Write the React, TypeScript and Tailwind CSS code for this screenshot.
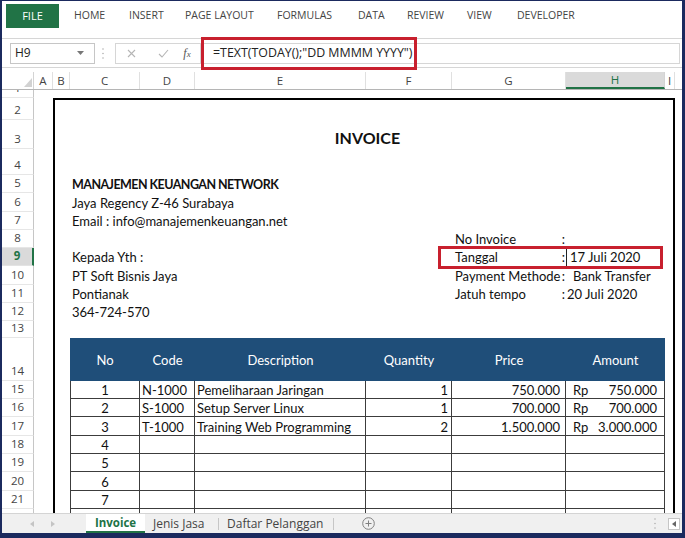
import React from 'react';

type Row = { n: number; h: string };
const R18 = 'h-[18.3px]';
const ROWS: Row[] = [
  { n: 1, h: 'h-[8px]' },
  { n: 2, h: 'h-[22px]' },
  { n: 3, h: 'h-[29px]' },
  { n: 4, h: 'h-[26px]' },
  { n: 5, h: R18 },
  { n: 6, h: R18 },
  { n: 7, h: R18 },
  { n: 8, h: R18 },
  { n: 9, h: R18 },
  { n: 10, h: R18 },
  { n: 11, h: R18 },
  { n: 12, h: R18 },
  { n: 13, h: 'h-[17px]' },
  { n: 14, h: 'h-[42.5px]' },
  { n: 15, h: R18 },
  { n: 16, h: R18 },
  { n: 17, h: R18 },
  { n: 18, h: R18 },
  { n: 19, h: R18 },
  { n: 20, h: R18 },
  { n: 21, h: R18 },
  { n: 22, h: R18 },
];

const COLS: [string, string][] = [
  ['A', 'w-[19px]'],
  ['B', 'w-[17px]'],
  ['C', 'w-[70px]'],
  ['D', 'w-[55px]'],
  ['E', 'w-[171px]'],
  ['F', 'w-[86px]'],
  ['G', 'w-[114px]'],
  ['H', 'w-[99px]'],
  ['I', 'w-[10px]'],
];

type D = { no: string; code?: string; desc?: string; qty?: string; price?: string; amt?: string };
const DATA: D[] = [
  { no: '1', code: 'N-1000', desc: 'Pemeliharaan Jaringan', qty: '1', price: '750.000', amt: '750.000' },
  { no: '2', code: 'S-1000', desc: 'Setup Server Linux', qty: '1', price: '700.000', amt: '700.000' },
  { no: '3', code: 'T-1000', desc: 'Training Web Programming', qty: '2', price: '1.500.000', amt: '3.000.000' },
  { no: '4' },
  { no: '5' },
  { no: '6' },
  { no: '7' },
  { no: '' },
];

function Ribbon() {
  const tabs: [string, string][] = [
    ['HOME', 'w-[55px]'],
    ['INSERT', 'w-[56px]'],
    ['PAGE LAYOUT', 'w-[92px]'],
    ['FORMULAS', 'w-[81px]'],
    ['DATA', 'w-[49px]'],
    ['REVIEW', 'w-[60px]'],
    ['VIEW', 'w-[50px]'],
    ['DEVELOPER', 'w-[80px]'],
  ];
  return (
    <div className="h-[38px] shrink-0 border-b border-[#d6d6d6] flex items-start pt-[3px] pl-[4px]">
      <div className="w-[53px] h-[24px] bg-[#217346] text-white text-[11px] flex items-center justify-center">FILE</div>
      <div className="flex items-center h-[24px] ml-[15px] text-[10.5px] text-[#444]">
        {tabs.map(([t, w]) => (
          <div key={t} className={`${w} whitespace-nowrap`}>
            {t}
          </div>
        ))}
      </div>
    </div>
  );
}

function FormulaBar() {
  return (
    <div className="h-[29px] shrink-0 border-b border-[#d6d6d6] flex items-center pl-[8px] pr-[2px]">
      <div className="w-[85px] h-[21px] border border-[#c6c6c6] flex items-center justify-between pl-[4px] pr-[10px] text-[12px] text-[#222]">
        <span>H9</span>
        <svg width="7" height="4" viewBox="0 0 7 4">
          <path d="M0 0H7L3.5 4Z" fill="#777" />
        </svg>
      </div>
      <div className="w-[16px] flex justify-center">
        <svg width="2" height="11" viewBox="0 0 2 11">
          <circle cx="1" cy="1" r="0.8" fill="#b0b0b0" />
          <circle cx="1" cy="5.5" r="0.8" fill="#b0b0b0" />
          <circle cx="1" cy="10" r="0.8" fill="#b0b0b0" />
        </svg>
      </div>
      <div className="ml-[4px] flex-1 h-[21px] border border-[#d6d6d6] flex items-center">
        <div className="w-[30px] flex justify-center">
          <svg width="9" height="9" viewBox="0 0 9 9">
            <path d="M1 1L8 8M8 1L1 8" stroke="#b5b5b5" strokeWidth="1.1" />
          </svg>
        </div>
        <div className="w-[34px] flex justify-center">
          <svg width="11" height="9" viewBox="0 0 11 9">
            <path d="M1 5L4 8L10 1" stroke="#b5b5b5" strokeWidth="1.1" fill="none" />
          </svg>
        </div>
        <div className="w-[14px] flex justify-center items-baseline italic [font-family:'Liberation_Serif',serif] text-[#555] text-[12px]">
          <span>f</span>
          <span className="text-[9px]">x</span>
        </div>
        <div className="w-[6px]" />
        <div className="h-full border-l border-[#d6d6d6] pl-[12px] flex items-center text-[12.4px] text-[#222] whitespace-nowrap">
          {'=TEXT(TODAY();"DD MMMM YYYY")'}
        </div>
      </div>
    </div>
  );
}

function ColumnHeaders() {
  return (
    <div className="mt-[4px] h-[18px] shrink-0 flex border-b border-[#b5b5b5] text-[11.5px] text-[#444]">
      <div className="w-[32px] shrink-0 border-r border-[#d4d4d4] flex items-end justify-end pr-[1px] pb-[2px]">
        <svg width="8" height="9" viewBox="0 0 8 9">
          <path d="M8 0V9H0Z" fill="#d2d2d2" />
        </svg>
      </div>
      {COLS.map(([l, w]) =>
        l === 'H' ? (
          <div
            key={l}
            className={`${w} shrink-0 flex items-center justify-center bg-[#dadada] text-[#217346] border-r border-[#d4d4d4] border-b-2 border-b-[#217346]`}
          >
            {l}
          </div>
        ) : (
          <div key={l} className={`${w} shrink-0 flex items-center justify-center border-r border-[#e0e0e0]`}>
            {l}
          </div>
        )
      )}
      <div className="flex-1" />
    </div>
  );
}

function InfoRow({
  left,
  bold,
  g,
  hText,
  hCls,
}: {
  left?: string;
  bold?: boolean;
  g?: string;
  hText?: string;
  hCls?: string;
}) {
  return (
    <div className={`${R18} shrink-0 flex w-[595px] text-[13px] leading-[15px] text-[#111]`}>
      <div
        className={`w-[382px] shrink-0 flex items-end pb-[1px] pl-[2px] whitespace-nowrap ${
          bold ? 'font-bold text-[12.5px] tracking-[-0.55px]' : ''
        }`}
      >
        {left}
      </div>
      <div className="w-[114px] shrink-0 flex items-end justify-between pb-[1px] pl-[3px] pr-[1px] whitespace-nowrap">
        <span>{g}</span>
        <span>{g ? ':' : ''}</span>
      </div>
      <div className={`w-[99px] shrink-0 flex items-end pb-[1px] whitespace-nowrap ${hCls ?? ''}`}>{hText}</div>
    </div>
  );
}

function TableHeader() {
  const heads: [string, string][] = [
    ['No', 'w-[70px]'],
    ['Code', 'w-[55px]'],
    ['Description', 'w-[171px]'],
    ['Quantity', 'w-[86px]'],
    ['Price', 'w-[114px]'],
    ['Amount', 'w-[99px]'],
  ];
  return (
    <div className="h-[42.5px] shrink-0 flex w-[595px] bg-[#1f4e79] text-white text-[13px] pt-[2px]">
      {heads.map(([t, w]) => (
        <div key={t} className={`${w} shrink-0 flex items-center justify-center`}>
          {t}
        </div>
      ))}
    </div>
  );
}

function DataRow({ d }: { d: D }) {
  const base = 'shrink-0 border-r border-b border-[#3c3c3c] flex items-end pb-0 whitespace-nowrap';
  return (
    <div className={`${R18} shrink-0 flex w-[595px] text-[13px] leading-[15px] text-[#111]`}>
      <div className={`${base} w-[70px] border-l justify-center`}>{d.no}</div>
      <div className={`${base} w-[55px] pl-[2px]`}>{d.code}</div>
      <div className={`${base} w-[171px] pl-[2px]`}>{d.desc}</div>
      <div className={`${base} w-[86px] justify-end pr-[3px]`}>{d.qty}</div>
      <div className={`${base} w-[114px] justify-end pr-[5px]`}>{d.price}</div>
      <div className={`${base} w-[99px] justify-between pl-[7px] pr-[7px]`}>
        <span>{d.amt ? 'Rp' : ''}</span>
        <span>{d.amt}</span>
      </div>
    </div>
  );
}

function Body() {
  return (
    <div className="flex-1 flex overflow-hidden">
      <div className="w-[32px] shrink-0 flex flex-col">
        {ROWS.map((r) =>
          r.n === 9 ? (
            <div
              key={r.n}
              className={`${r.h} shrink-0 flex items-end justify-center pb-[2px] overflow-hidden leading-[14px] text-[11.5px] font-bold bg-[#dadada] text-[#217346] border-b border-[#e3e3e3] border-r-2 border-r-[#217346]`}
            >
              {r.n}
            </div>
          ) : (
            <div
              key={r.n}
              className={`${r.h} shrink-0 flex items-end justify-center pb-[2px] overflow-hidden leading-[14px] text-[11.5px] text-[#444] border-b border-[#e6e6e6] border-r border-r-[#c6c6c6]`}
            >
              {r.n === 22 ? '' : r.n}
            </div>
          )
        )}
      </div>
      <div className="flex-1 flex flex-col [font-family:Lato,sans-serif]">
        <div className="h-[8px] shrink-0" />
        <div className="flex-1 flex">
          <div className="w-[19px] shrink-0" />
          <div className="w-[622px] shrink-0 border-l-2 border-t-2 border-r-2 border-black pl-[15px] flex flex-col overflow-hidden">
            <div className="h-[20px] shrink-0" />
            <div className="h-[29px] shrink-0 w-[595px] flex items-end justify-center pb-[2px] text-[16px] leading-[18px] font-bold text-[#111]">
              INVOICE
            </div>
            <div className="h-[26px] shrink-0" />
            <InfoRow left="MANAJEMEN KEUANGAN NETWORK" bold />
            <InfoRow left="Jaya Regency Z-46 Surabaya" />
            <InfoRow left="Email : info@manajemenkeuangan.net" />
            <InfoRow g="No Invoice" />
            <InfoRow left="Kepada Yth :" g="Tanggal" hText="17 Juli 2020" hCls="pl-[3px] border-l border-l-[#222]" />
            <InfoRow left="PT Soft Bisnis Jaya" g="Payment Methode" hText="Bank Transfer" hCls="pl-[7px]" />
            <InfoRow left="Pontianak" g="Jatuh tempo" hText="20 Juli 2020" hCls="pl-[1px]" />
            <InfoRow left="364-724-570" />
            <div className="h-[17px] shrink-0" />
            <TableHeader />
            {DATA.map((d, i) => (
              <DataRow key={i} d={d} />
            ))}
          </div>
          <div className="flex-1" />
        </div>
      </div>
    </div>
  );
}

function SheetTabs() {
  return (
    <div className="h-[20px] shrink-0 border-t border-[#d4d4d4] bg-[#f0f0f0] flex items-stretch text-[12px] text-[#444]">
      <div className="w-[84px] shrink-0 flex items-center pl-[28px] gap-[17px]">
        <svg width="4" height="6" viewBox="0 0 4 6">
          <path d="M4 0V6L0 3Z" fill="#c4c4c4" />
        </svg>
        <svg width="4" height="6" viewBox="0 0 4 6">
          <path d="M0 0V6L4 3Z" fill="#c4c4c4" />
        </svg>
      </div>
      <div className="w-[59px] shrink-0 bg-white border-b-2 border-[#217346] flex items-center justify-center font-bold text-[#217346] text-[11.5px]">
        Invoice
      </div>
      <div className="w-[73px] shrink-0 flex items-center pl-[8px]">Jenis Jasa</div>
      <div className="w-px h-[12px] self-center bg-[#c6c6c6]" />
      <div className="w-[114px] shrink-0 flex items-center pl-[8px] whitespace-nowrap">Daftar Pelanggan</div>
      <div className="w-px h-[12px] self-center bg-[#c6c6c6]" />
      <div className="ml-[28px] flex items-center">
        <svg width="13" height="13" viewBox="0 0 13 13">
          <circle cx="6.5" cy="6.5" r="5.8" fill="none" stroke="#808080" strokeWidth="1" />
          <path d="M6.5 3.5V9.5M3.5 6.5H9.5" stroke="#808080" strokeWidth="1" />
        </svg>
      </div>
      <div className="ml-auto flex items-center mr-[2px]">
        <svg width="2" height="11" viewBox="0 0 2 11">
          <circle cx="1" cy="1" r="0.8" fill="#b0b0b0" />
          <circle cx="1" cy="5.5" r="0.8" fill="#b0b0b0" />
          <circle cx="1" cy="10" r="0.8" fill="#b0b0b0" />
        </svg>
        <div className="ml-[12px] w-[12px] h-[12px] border border-[#c6c6c6] bg-white flex items-center justify-center">
          <svg width="4" height="6" viewBox="0 0 4 6">
            <path d="M4 0V6L0 3Z" fill="#666" />
          </svg>
        </div>
      </div>
    </div>
  );
}

export default function App() {
  return (
    <div className="relative w-[685px] h-[538px] overflow-hidden bg-white border-solid border-[#1b2a5e] border-l-2 border-r-[3px] border-t border-b-[5px] flex flex-col [font-family:'Open_Sans',sans-serif]">
      <Ribbon />
      <FormulaBar />
      <ColumnHeaders />
      <Body />
      <SheetTabs />
      <div className="absolute left-[199px] top-[36px] w-[216px] h-[33px] border-[3px] border-[#c8202e]" />
      <div className="absolute left-[436px] top-[245px] w-[225px] h-[23px] border-[3px] border-[#c8202e]" />
    </div>
  );
}
